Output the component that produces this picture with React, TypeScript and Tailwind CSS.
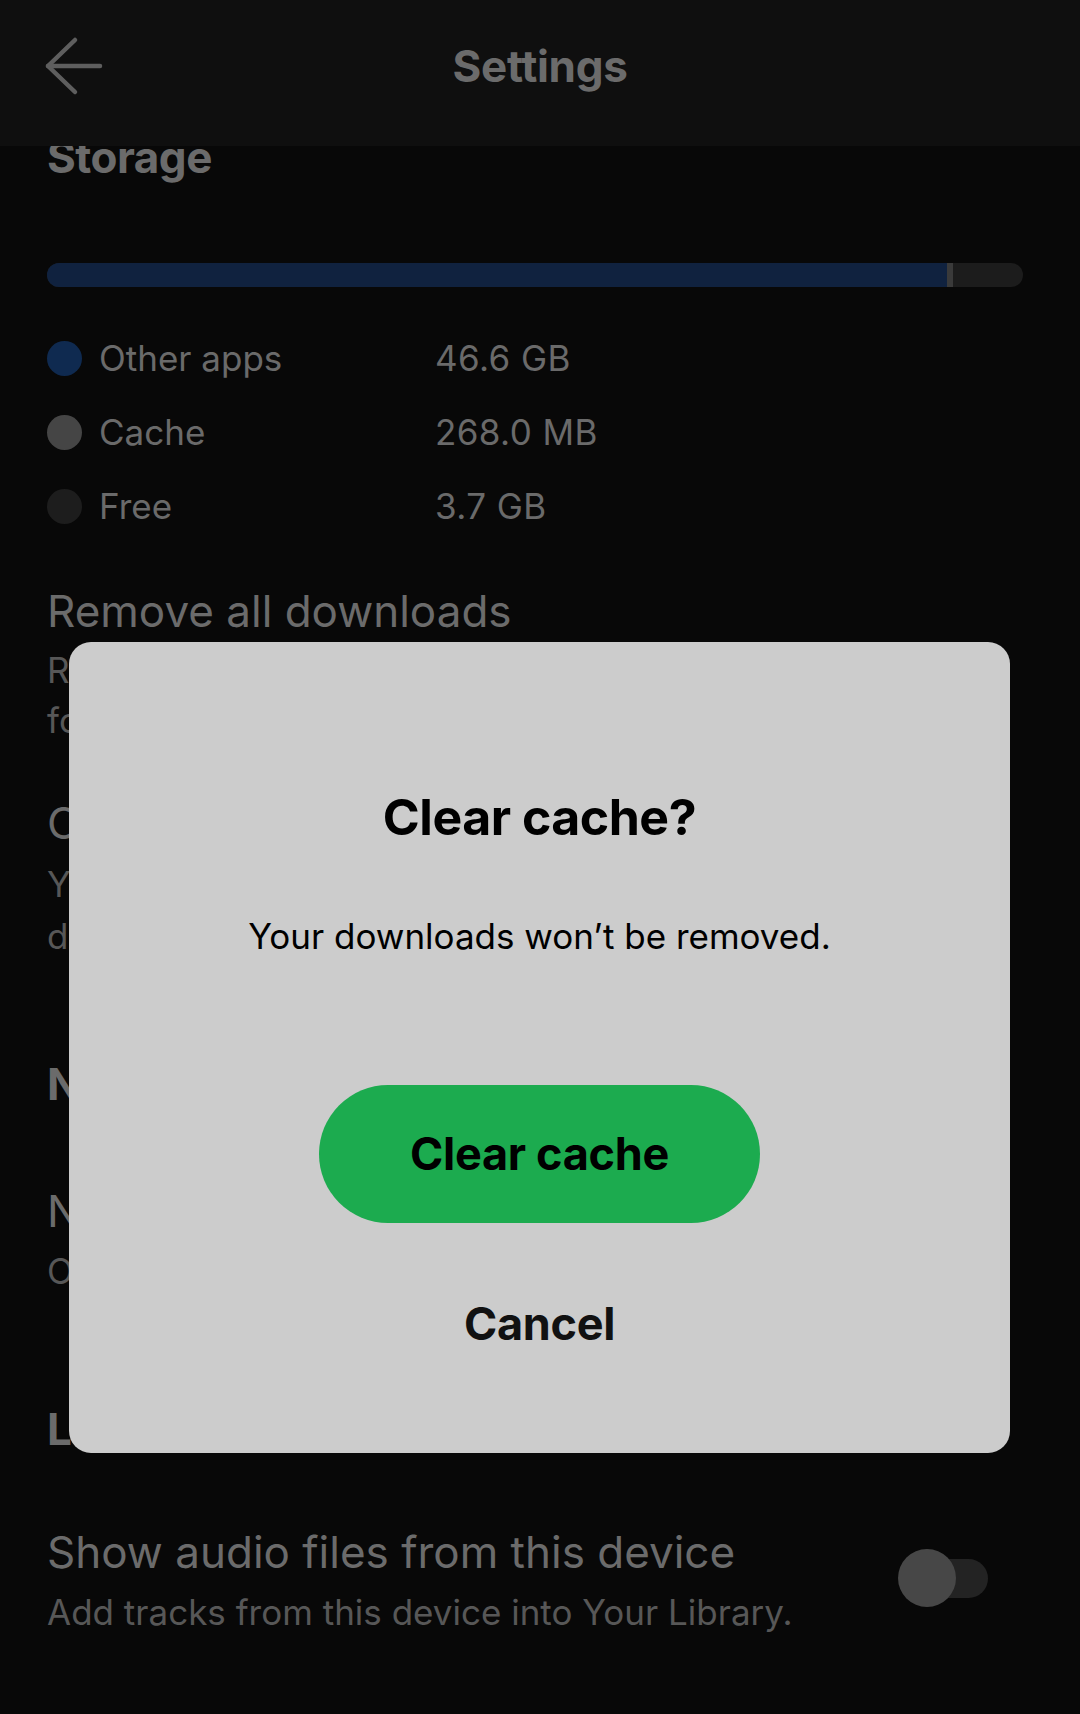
const font = { fontFamily: 'Inter, "Noto Sans", sans-serif' };

function BackArrow() {
  return (
    <svg width="62" height="62" viewBox="0 0 62 62" fill="none" stroke="#5e5e5e" strokeWidth="4.5" strokeLinecap="round" strokeLinejoin="round">
      <path d="M6 31 L58 31" />
      <path d="M33 5 L6 31 L33 57" />
    </svg>
  );
}

const legend = [
  { label: 'Other apps', value: '46.6 GB', dot: 'bg-[#0f2a50]' },
  { label: 'Cache', value: '268.0 MB', dot: 'bg-[#454545]' },
  { label: 'Free', value: '3.7 GB', dot: 'bg-[#1d1d1d]' },
];

export default function App() {
  return (
    <div className="relative h-[1714px] w-[1080px] overflow-hidden bg-[#080808]" style={font}>
      <header className="absolute inset-x-0 top-0 z-10 grid h-[146px] grid-cols-[1fr_auto_1fr] items-center bg-[#0f0f0f] px-[42px] pb-[14px]">
        <div className="flex items-center">
          <BackArrow />
        </div>
        <h1 className="text-[44px] font-bold tracking-[-0.3px] text-[#6b6b6b]">Settings</h1>
        <div />
      </header>

      <main className="flex flex-col px-[47px] pt-[130px]">
        <h2 className="text-[44px] font-bold leading-[54px] tracking-[-0.5px] text-[#6b6b6b]">Storage</h2>

        <div className="mt-[79px] flex h-[24px] w-[976px] overflow-hidden rounded-full bg-[#1c1c1c]">
          <div className="h-full w-[900px] bg-[#10223f]" />
          <div className="h-full w-[6px] bg-[#3a3a3a]" />
        </div>

        <div className="mt-[34px] flex flex-col">
          {legend.map((row) => (
            <div key={row.label} className="flex h-[74px] items-center">
              <span className={`h-[35px] w-[35px] shrink-0 rounded-full ${row.dot}`} />
              <span className="ml-[17px] w-[336px] text-[35px] text-[#6a6a6a]">{row.label}</span>
              <span className="text-[35px] tracking-[0.4px] text-[#6a6a6a]">{row.value}</span>
            </div>
          ))}
        </div>

        <p className="mt-[43px] text-[44px] leading-[50px] text-[#6b6b6b]">Remove all downloads</p>
        <p className="mt-[9px] text-[35px] leading-[50px] text-[#575757]">
          Remove all the Spotify content you have
          <br />
          for offline use.
        </p>

        <p className="mt-[53px] text-[44px] leading-[50px] text-[#6b6b6b]">Clear cache</p>
        <p className="mt-[10px] text-[35px] leading-[52px] text-[#575757]">
          You can free up storage by clearing
          <br />
          downloads stay on this device.
        </p>

        <h2 className="mt-[94px] text-[44px] font-bold leading-[56px] tracking-[-0.5px] text-[#6b6b6b]">Notifications</h2>
        <p className="mt-[74px] text-[44px] leading-[50px] text-[#6b6b6b]">Notifications</p>
        <p className="mt-[10px] text-[35px] leading-[50px] text-[#575757]">Open notification settings.</p>

        <h2 className="mt-[105px] text-[44px] font-bold leading-[56px] tracking-[-0.5px] text-[#6b6b6b]">Local files</h2>

        <div className="mt-[70px] flex items-start justify-between">
          <div className="flex flex-col">
            <p className="text-[44px] leading-[50px] text-[#6b6b6b]">Show audio files from this device</p>
            <p className="mt-[10px] text-[35px] leading-[50px] text-[#575757]">Add tracks from this device into Your Library.</p>
          </div>
          <div className="relative mr-[45px] mt-[22px] h-[58px] w-[90px] shrink-0">
            <div className="absolute right-0 top-[10px] h-[39px] w-[76px] rounded-full bg-[#232323]" />
            <div className="absolute left-0 top-0 h-[58px] w-[58px] rounded-full bg-[#474747]" />
          </div>
        </div>
      </main>

      {/* dialog */}
      <div className="absolute left-[69px] top-[642px] z-20 flex h-[811px] w-[941px] flex-col items-center rounded-[22px] bg-[#cccccc] pt-[145px]">
        <h3 className="text-[50px] font-bold leading-[60px] tracking-[-0.5px] text-black">Clear cache?</h3>
        <p className="mt-[66px] text-[35px] leading-[46px] text-black">Your downloads won’t be removed.</p>
        <button className="mt-[126px] flex h-[138px] w-[441px] items-center justify-center rounded-full bg-[#1cab4f] text-[45px] font-bold tracking-[-0.3px] text-black">
          Clear cache
        </button>
        <button className="mt-[73px] h-[56px] text-[45px] font-bold leading-[56px] tracking-[-0.3px] text-[#111]">Cancel</button>
      </div>
    </div>
  );
}
